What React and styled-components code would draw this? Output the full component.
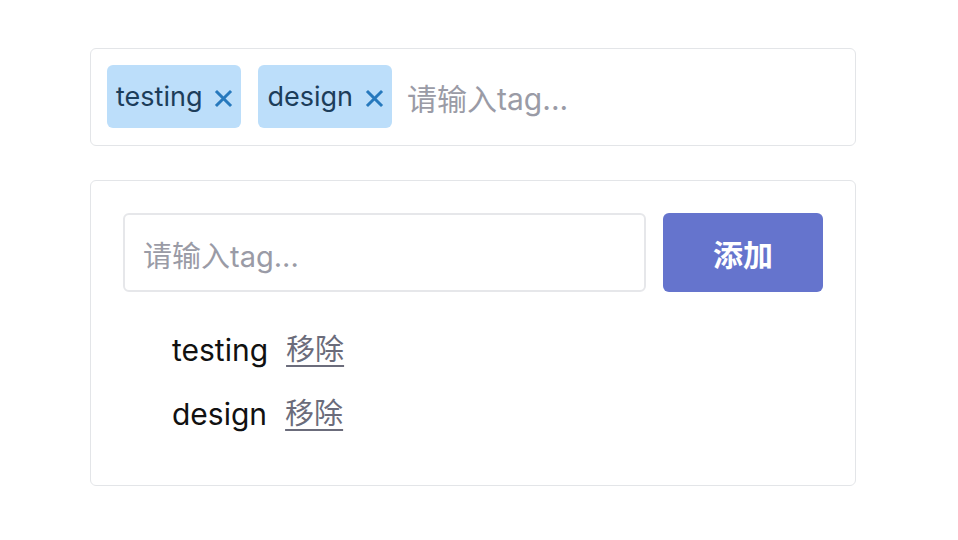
import React, { useState } from 'react'
import styled, { createGlobalStyle } from 'styled-components'

const GlobalStyle = createGlobalStyle`
  html, body {
    margin: 0;
    padding: 0;
    background: #fff;
  }
  body {
    font-family: Inter, "Noto Sans CJK SC", "Noto Sans", sans-serif;
    -webkit-font-smoothing: antialiased;
  }
`

const Page = styled.div`
  width: 766px;
  padding: 48px 0 0 90px;
  display: flex;
  flex-direction: column;
  gap: 34px;
`

const Card = styled.div`
  box-sizing: border-box;
  border: 1px solid #e3e5e8;
  border-radius: 6px;
  padding: ${p => p.$pad};
`

const TagRow = styled.div`
  display: flex;
  align-items: center;
  gap: 17px;
`

const Tag = styled.span`
  display: inline-flex;
  align-items: center;
  height: 63px;
  box-sizing: border-box;
  padding: 0 8px 0 9px;
  gap: 12px;
  border-radius: 6px;
  background: #bcdefa;
  color: #1c3d5a;
  font-size: 27px;
`

const Close = styled.span`
  color: #2779bd;
  display: inline-flex;
  width: 19px;
  height: 19px;
  margin-top: 3px;
`

const InlineInput = styled.input`
  flex: 1;
  border: none;
  outline: none;
  font: inherit;
  font-size: 30px;
  color: #333;
  padding: 4px 0 0;
  margin-left: -2px;
  background: transparent;
  &::placeholder {
    color: #9a9ba6;
  }
`

const AddRow = styled.div`
  display: flex;
  gap: 17px;
`

const TextInput = styled.input`
  flex: 1;
  box-sizing: border-box;
  height: 79px;
  border: 2px solid #e6e7ea;
  border-radius: 6px;
  padding: 8px 18px 0;
  font: inherit;
  font-size: 29px;
  outline: none;
  &::placeholder {
    color: #9a9ba6;
  }
`

const AddButton = styled.button`
  width: 160px;
  height: 79px;
  border: none;
  border-radius: 6px;
  background: #6574cd;
  color: #fff;
  font: inherit;
  font-size: 30px;
  font-weight: 700;
  cursor: pointer;
`

const List = styled.ul`
  list-style: none;
  margin: 38px 0 51px;
  padding: 0 0 0 49px;
  display: flex;
  flex-direction: column;
  gap: 24px;
`

const Item = styled.li`
  display: flex;
  align-items: center;
  gap: 18px;
  font-size: 30px;
  line-height: 40px;
  color: #111;
`

const Remove = styled.a`
  color: #6b6c7b;
  font-size: 29px;
  text-decoration: underline;
  text-underline-offset: 5px;
  text-decoration-thickness: 2px;
  cursor: pointer;
`

const X = () => (
  <svg viewBox="0 0 19 19" width="19" height="19" fill="none" stroke="currentColor" strokeWidth="3" strokeLinecap="square">
    <path d="M3 3 L16 16 M16 3 L3 16" />
  </svg>
)

export default function App() {
  const [tags] = useState(['testing', 'design'])
  return (
    <>
      <GlobalStyle />
      <Page>
        <Card $pad="16px 16px 17px">
          <TagRow>
            {tags.map(t => (
              <Tag key={t}>
                {t}
                <Close>
                  <X />
                </Close>
              </Tag>
            ))}
            <InlineInput placeholder="请输入tag..." />
          </TagRow>
        </Card>
        <Card $pad="32px 32px 0">
          <AddRow>
            <TextInput placeholder="请输入tag..." />
            <AddButton>添加</AddButton>
          </AddRow>
          <List>
            {tags.map(t => (
              <Item key={t}>
                {t}
                <Remove>移除</Remove>
              </Item>
            ))}
          </List>
        </Card>
      </Page>
    </>
  )
}
